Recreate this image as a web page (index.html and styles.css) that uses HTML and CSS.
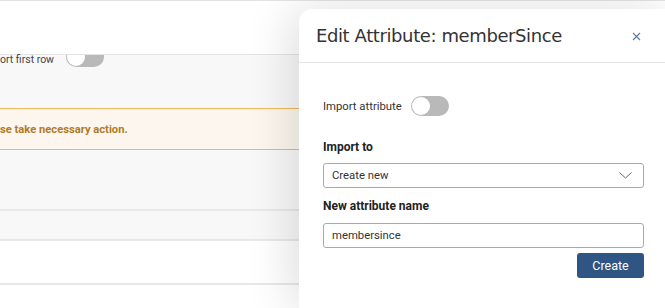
FILE: index.html
```html
<!DOCTYPE html>
<html lang="en">
<head>
    <meta charset="UTF-8">
    <meta name="viewport" content="width=device-width, initial-scale=1.0">
    <title>Edit Attribute</title>
    <link rel="stylesheet" href="styles.css">
</head>
<body>
    <div class="page">
        <div class="page-header"></div>
        <div class="first-row">
            <span class="first-row-label">ort first row</span>
            <span class="toggle-clip"><span class="toggle"><span class="knob"></span></span></span>
        </div>
        <div class="warning">
            <span class="warning-text">se take necessary action.</span>
        </div>
        <div class="gray-row tall"></div>
        <div class="gray-row"></div>
        <div class="white-row"></div>
        <div class="white-row last"></div>
    </div>

    <div class="modal">
        <div class="modal-header">
            <h2 class="modal-title">Edit Attribute: memberSince</h2>
            <span class="close-btn">
                <svg width="9" height="9" viewBox="0 0 9 9"><path d="M1 1L8 8M8 1L1 8" stroke="#5b7ca3" stroke-width="1.1" fill="none"/></svg>
            </span>
        </div>
        <div class="modal-body">
            <div class="import-row">
                <span>Import attribute</span>
                <span class="toggle"><span class="knob"></span></span>
            </div>
            <label class="field-label">Import to</label>
            <div class="select-box">
                <span>Create new</span>
                <svg width="13" height="7" viewBox="0 0 13 7"><path d="M0.5 0.5L6.5 6L12.5 0.5" stroke="#666" stroke-width="1" fill="none"/></svg>
            </div>
            <label class="field-label second">New attribute name</label>
            <div class="text-input">membersince</div>
            <div class="actions">
                <button class="create-btn">Create</button>
            </div>
        </div>
    </div>
</body>
</html>
```

FILE: styles.css
```css
body {
  margin: 0;
  font-family: Roboto, Arial, sans-serif;
  overflow: hidden;
  height: 308px;
  position: relative;
  background: #fff;
}

.page {
  display: flex;
  flex-direction: column;
}

.page-header {
  height: 53px;
  background: #fff;
  border-top: 1px solid #e3e3e3;
  border-bottom: 1px solid #e4e4e4;
}

/* row scrolled half under the header */
.first-row {
  display: flex;
  align-items: flex-start;
  gap: 12px;
  height: 12px;
  background: #f8f8f8;
  padding-bottom: 41px;
  white-space: nowrap;
}

.first-row-label {
  font-size: 10.5px;
  color: #444;
  line-height: 10px;
}

.toggle-clip {
  display: flex;
  align-items: flex-end;
  height: 12px;
  overflow: hidden;
  flex-shrink: 0;
}

.toggle {
  display: inline-flex;
  align-items: center;
  flex-shrink: 0;
  width: 38px;
  height: 20px;
  border-radius: 10px;
  background: #b9b9b9;
  padding: 1px;
  box-sizing: border-box;
}

.knob {
  width: 18px;
  height: 18px;
  border-radius: 50%;
  background: #fff;
  box-sizing: border-box;
}

.warning {
  height: 40px;
  background: #fcf6ef;
  border-top: 1px solid #f6b75a;
  border-bottom: 1px solid #f6b75a;
  display: flex;
  align-items: center;
  white-space: nowrap;
}

.warning-text {
  font-size: 11.2px;
  font-weight: bold;
  color: #b07b25;
}

.gray-row {
  background: #f8f8f8;
  border-bottom: 2px solid #e8e8e8;
  height: 28px;
}

.gray-row.tall {
  height: 59px;
}

.white-row {
  background: #fff;
  border-bottom: 2px solid #e8e8e8;
  height: 42px;
}

.white-row.last {
  border-bottom: none;
  height: 24px;
}

/* modal panel over the page */
.modal {
  position: absolute;
  top: 9px;
  left: 299px;
  width: 370px;
  height: 299px;
  background: #fff;
  border-top-left-radius: 13px;
  box-shadow: -8px 0 45px rgba(0, 0, 0, 0.13);
}

.modal-header {
  height: 53px;
  border-bottom: 1px solid #e5e5e5;
  display: flex;
  align-items: center;
  justify-content: space-between;
  padding: 0 28px 0 17px;
}

.modal-title {
  margin: 0;
  font-family: "DejaVu Sans", sans-serif;
  font-weight: normal;
  font-size: 18px;
  color: #333;
  letter-spacing: -0.4px;
}

.close-btn {
  display: flex;
  padding-top: 2px;
}

.modal-body {
  padding: 33px 24px 0 24px;
  width: 321px;
  font-size: 11.3px;
  color: #333;
}

.import-row {
  display: flex;
  align-items: center;
  gap: 9px;
  margin-bottom: 24px;
}

.field-label {
  display: block;
  font-weight: bold;
  font-size: 12px;
  color: #222;
  margin-bottom: 9px;
}

.field-label.second {
  margin-bottom: 10px;
}

.select-box, .text-input {
  height: 25px;
  border: 1px solid #a9a9a9;
  border-radius: 3px;
  box-sizing: border-box;
  display: flex;
  align-items: center;
  justify-content: space-between;
  padding: 0 11px 0 8px;
  margin-bottom: 11px;
}

.text-input {
  margin-bottom: 5px;
}

.actions {
  display: flex;
  justify-content: flex-end;
}

.create-btn {
  width: 67px;
  height: 25px;
  background: #2e5583;
  color: #fff;
  border: none;
  border-radius: 3px;
  font-family: Roboto, Arial, sans-serif;
  font-size: 12.5px;
}
```
